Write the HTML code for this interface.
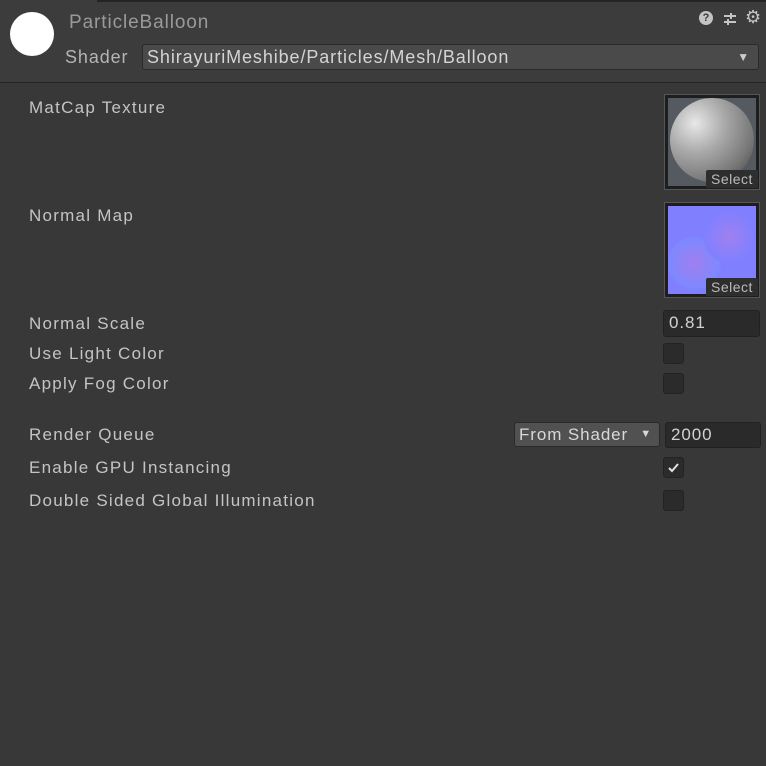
<!DOCTYPE html>
<html><head><style>
body{margin:0;width:766px;height:766px;background:#383838;font-family:"Liberation Sans",sans-serif;color:#c4c4c4;overflow:hidden;position:relative;letter-spacing:0.9px}
.a{position:absolute}
.hdr{left:0;top:0;width:766px;height:82px;background:#3c3c3c;border-bottom:1px solid #232323}
.lbl{font-size:17px;letter-spacing:1.25px;left:29px}
.cb{width:19px;height:19px;background:#2b2b2b;border:1px solid #232323;border-radius:3px;left:663px}
.fld{background:#2a2a2a;border:1px solid #212121;border-radius:3px;font-size:17px;color:#d2d2d2;padding-left:5px;box-sizing:border-box;line-height:24px}
.tex{width:96px;height:96px;left:664px;background:#1e1e1e;border:1px solid #555;box-sizing:border-box}
.sel{right:1px;bottom:1px;width:52px;height:18px;background:#2e2e2e;color:#bbb;font-size:14px;letter-spacing:0.5px;text-align:center;line-height:18px;border-radius:2px 0 0 0}
</style></head><body>
<div class="a hdr"></div>
<div class="a" style="left:97px;top:0;width:669px;height:2px;background:#242424"></div>
<div class="a" style="left:10px;top:12px;width:44px;height:44px;border-radius:50%;background:#fff"></div>
<div class="a" style="left:69px;top:12px;font-size:19px;color:#9a9a9a">ParticleBalloon</div>
<div class="a" style="left:65px;top:47px;font-size:18px;color:#b4b4b4">Shader</div>
<div class="a" style="left:142px;top:44px;width:617px;height:26px;background:#4a4a4a;border:1px solid #2a2a2a;border-radius:3px;box-sizing:border-box;font-size:18px;color:#d4d4d4;padding-left:4px;line-height:24px">ShirayuriMeshibe/Particles/Mesh/Balloon<span class="a" style="right:8px;top:0;font-size:12px;color:#ccc">▼</span></div>
<div class="a" style="left:699px;top:11px;width:14px;height:14px;border-radius:50%;background:#c4c4c4;color:#3c3c3c;font-size:11px;font-weight:bold;text-align:center;line-height:14px;letter-spacing:0">?</div>
<svg class="a" style="left:722px;top:11px" width="16" height="16"><path d="M2 5h12M2 11h12M9 2v6M6 8v6" stroke="#c4c4c4" stroke-width="2"/></svg>
<div class="a" style="left:745px;top:7px;font-size:18px;color:#c4c4c4">⚙</div>

<div class="a lbl" style="top:98px">MatCap Texture</div>
<div class="a tex" style="top:94px"><div class="a" style="left:3px;top:3px;width:88px;height:88px;background:#555a60"><div class="a" style="left:2px;top:0;width:84px;height:84px;border-radius:50%;background:radial-gradient(circle at 30% 30%,#e8e8e8,#aaa 35%,#777 70%,#3a3a3a)"></div></div><div class="a sel">Select</div></div>
<div class="a lbl" style="top:206px">Normal Map</div>
<div class="a tex" style="top:202px"><div class="a" style="left:3px;top:3px;width:88px;height:88px;background:radial-gradient(circle at 70% 35%,#a080f0,#8080ff 30%,transparent 32%),radial-gradient(circle at 30% 65%,#a07ff0,#7e88ff 30%,transparent 32%),#8080ff"></div><div class="a sel">Select</div></div>

<div class="a lbl" style="top:314px">Normal Scale</div>
<div class="a fld" style="left:663px;top:310px;width:97px;height:27px">0.81</div>
<div class="a lbl" style="top:344px">Use Light Color</div>
<div class="a cb" style="top:343px"></div>
<div class="a lbl" style="top:374px">Apply Fog Color</div>
<div class="a cb" style="top:373px"></div>

<div class="a lbl" style="top:425px">Render Queue</div>
<div class="a" style="left:514px;top:422px;width:146px;height:25px;background:#515151;border:1px solid #2a2a2a;border-radius:3px;box-sizing:border-box;font-size:17px;color:#d8d8d8;padding-left:4px;line-height:23px">From Shader<span class="a" style="right:7px;top:0;font-size:11px">▼</span></div>
<div class="a fld" style="left:665px;top:422px;width:96px;height:26px">2000</div>
<div class="a lbl" style="top:458px">Enable GPU Instancing</div>
<div class="a cb" style="top:457px"><svg width="19" height="19"><path d="M5 10l3 3 6-7" stroke="#e0e0e0" stroke-width="2" fill="none"/></svg></div>
<div class="a lbl" style="top:491px">Double Sided Global Illumination</div>
<div class="a cb" style="top:490px"></div>
</body></html>
